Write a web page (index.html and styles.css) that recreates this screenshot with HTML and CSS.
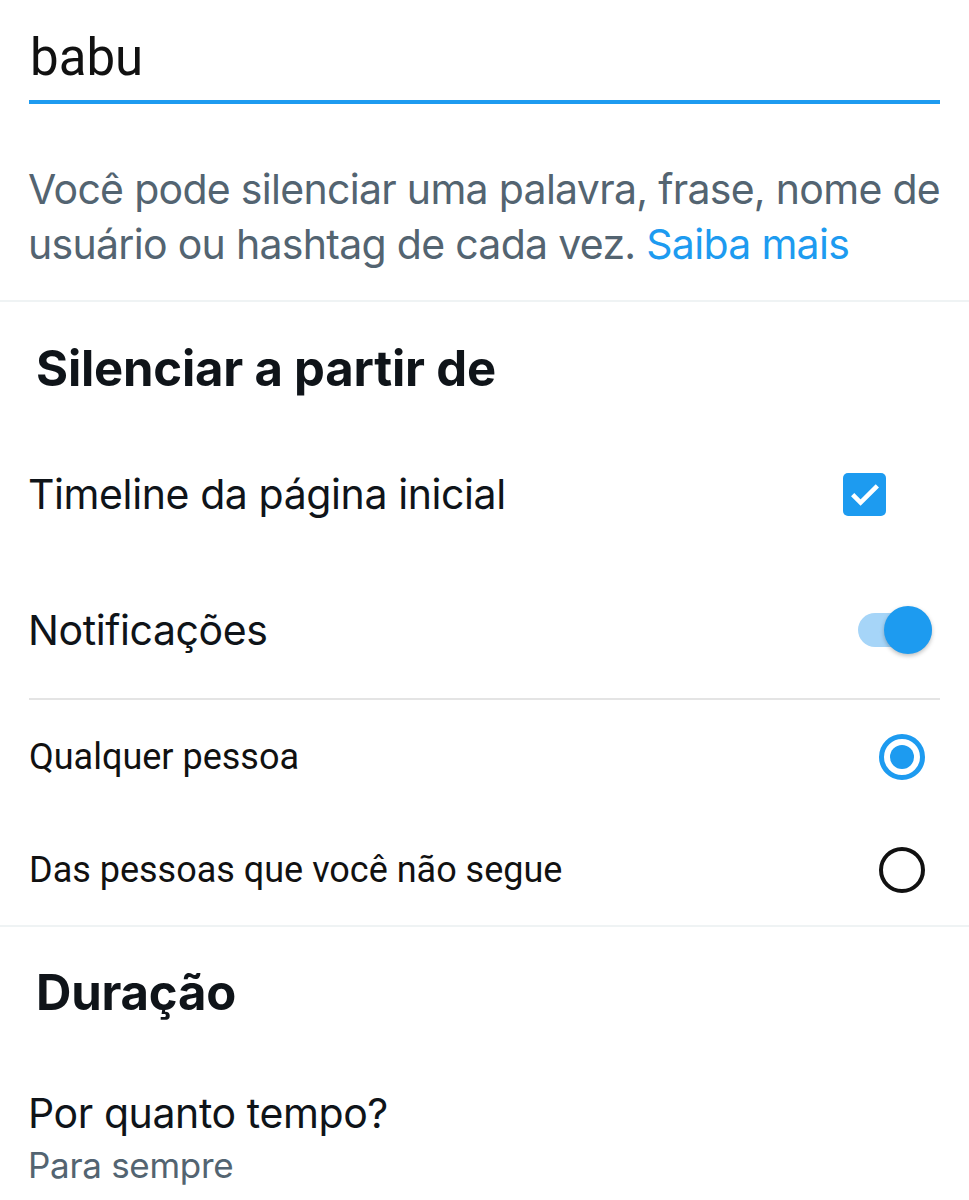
FILE: index.html
```html
<!DOCTYPE html>
<html lang="pt-BR">
<head>
    <meta charset="UTF-8">
    <meta name="viewport" content="width=device-width, initial-scale=1.0">
    <title>Silenciar palavra</title>
    <link rel="stylesheet" href="styles.css">
</head>
<body>
    <!-- campo da palavra -->
    <div class="word-field">
        <span class="word-value">babu</span>
    </div>

    <!-- explicação -->
    <p class="hint">Você pode silenciar uma palavra, frase, nome de usuário ou hashtag de cada vez. <a href="#" class="link">Saiba mais</a></p>

    <hr class="divider">

    <!-- Silenciar a partir de -->
    <h2 class="section-title">Silenciar a partir de</h2>

    <div class="option-row">
        <span class="option-label">Timeline da página inicial</span>
        <span class="checkbox">
            <svg viewBox="0 0 24 24" width="38" height="38"><path d="M4.2 12.4l5 5L19.8 6.8" fill="none" stroke="#fff" stroke-width="2.9" stroke-linecap="butt"/></svg>
        </span>
    </div>

    <div class="option-row">
        <span class="option-label">Notificações</span>
        <span class="toggle"><span class="toggle-thumb"></span></span>
    </div>

    <div class="inset-divider"></div>

    <div class="radio-row first">
        <span class="radio-label">Qualquer pessoa</span>
        <span class="radio checked"></span>
    </div>

    <div class="radio-row second">
        <span class="radio-label">Das pessoas que você não segue</span>
        <span class="radio"></span>
    </div>

    <hr class="divider">

    <!-- Duração -->
    <h2 class="section-title duration">Duração</h2>

    <div class="duration-item">
        <div class="duration-question">Por quanto tempo?</div>
        <div class="duration-value">Para sempre</div>
    </div>
</body>
</html>
```

FILE: styles.css
```css
/* página de silenciar */
body {
    margin: 0;
    background: #fff;
    color: #0f1419;
    font-family: 'Inter', 'Noto Sans', sans-serif;
}

/* campo de texto */
.word-field {
    margin: 0 29px;
    height: 100px;
    border-bottom: 4px solid #1d9bf0;
    box-sizing: content-box;
}

.word-value {
    display: block;
    padding-top: 18px;
    padding-left: 1px;
    font-family: 'Roboto', sans-serif;
    font-size: 51px;
    line-height: 80px;
    color: #111;
}

.hint {
    margin: 0;
    padding: 58px 10px 28px 28px;
    font-size: 41px;
    line-height: 55px;
    letter-spacing: -0.7px;
    color: #536471;
}

.link {
    color: #1d9bf0;
    text-decoration: none;
}

.divider {
    margin: 0;
    border: 0;
    height: 2px;
    background: #eff3f4;
}

.section-title {
    margin: 0;
    padding: 38px 36px 28px 36px;
    font-size: 49px;
    line-height: 58px;
    font-weight: 700;
    letter-spacing: -0.2px;
}

/* linhas com controle */
.option-row {
    display: flex;
    align-items: center;
    justify-content: space-between;
    height: 136px;
    padding: 0 37px 0 28px;
}

.option-label {
    font-size: 41px;
    letter-spacing: -0.4px;
}

.checkbox {
    width: 43px;
    height: 43px;
    margin-right: 46px;
    border-radius: 5px;
    background: #1d9bf0;
    display: flex;
    align-items: center;
    justify-content: center;
}

.toggle {
    position: relative;
    width: 74px;
    height: 34px;
    border-radius: 17px;
    background: #a6d5f8;
}

.toggle-thumb {
    position: absolute;
    right: 0;
    top: -7px;
    width: 48px;
    height: 48px;
    border-radius: 50%;
    background: #1d9bf0;
    box-shadow: 0 2px 4px rgba(0, 0, 0, 0.25);
}

.inset-divider {
    margin: 0 29px;
    height: 2px;
    background: #e4e4e4;
}

/* opções de rádio */
.radio-row {
    display: flex;
    align-items: center;
    justify-content: space-between;
    padding: 0 44px 0 29px;
}

.radio-row.first {
    height: 114px;
}

.radio-row.second {
    height: 111px;
}

.radio-label {
    font-family: 'Roboto', sans-serif;
    font-size: 36px;
    color: #111;
}

.radio {
    width: 46px;
    height: 46px;
    box-sizing: border-box;
    border: 4px solid #111;
    border-radius: 50%;
    display: flex;
    align-items: center;
    justify-content: center;
}

.radio.checked {
    border: 5px solid #1d9bf0;
}

.radio.checked::after {
    content: "";
    width: 24px;
    height: 24px;
    border-radius: 50%;
    background: #1d9bf0;
}

/* duração */
.section-title.duration {
    padding-top: 37px;
    padding-bottom: 66px;
}

.duration-item {
    padding: 0 28px;
}

.duration-question {
    font-size: 41px;
    line-height: 50px;
    letter-spacing: -0.4px;
}

.duration-value {
    margin-top: 5px;
    font-size: 35px;
    line-height: 44px;
    letter-spacing: -0.3px;
    color: #536471;
}
```
